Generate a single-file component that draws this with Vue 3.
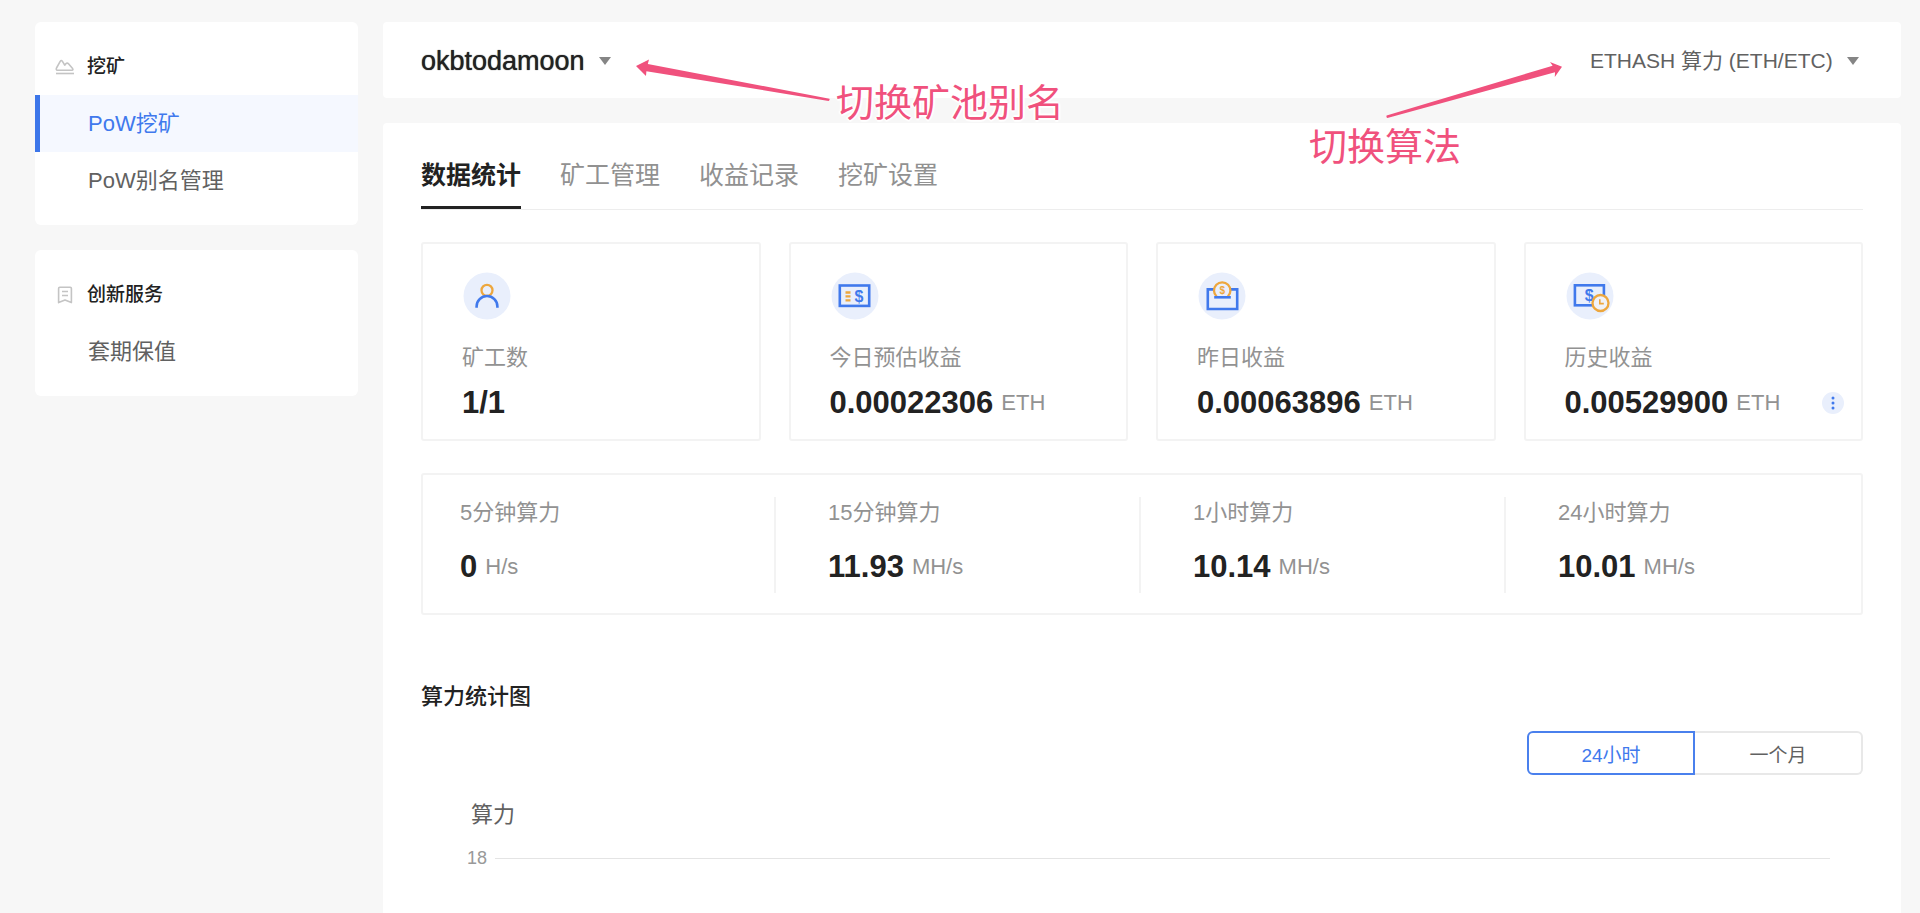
<script setup>
import { ref } from 'vue'

const menus = [
  { title: '挖矿', icon: 'mountain', items: ['PoW挖矿', 'PoW别名管理'] },
  { title: '创新服务', icon: 'bookmark', items: ['套期保值'] }
]
const activeMenu = ref('PoW挖矿')

const tabs = ['数据统计', '矿工管理', '收益记录', '挖矿设置']
const activeTab = ref('数据统计')

const cards = [
  { icon: 'worker', label: '矿工数', value: '1/1', unit: '' },
  { icon: 'bill', label: '今日预估收益', value: '0.00022306', unit: 'ETH' },
  { icon: 'wallet', label: '昨日收益', value: '0.00063896', unit: 'ETH' },
  { icon: 'history', label: '历史收益', value: '0.00529900', unit: 'ETH', more: true }
]

const rates = [
  { label: '5分钟算力', value: '0', unit: 'H/s' },
  { label: '15分钟算力', value: '11.93', unit: 'MH/s' },
  { label: '1小时算力', value: '10.14', unit: 'MH/s' },
  { label: '24小时算力', value: '10.01', unit: 'MH/s' }
]

const ranges = ['24小时', '一个月']
const activeRange = ref('24小时')
</script>

<template>
  <div class="page">
    <aside class="sidebar">
      <nav v-for="menu in menus" :key="menu.title" class="menu" :aria-label="menu.title">
        <h2 class="menu-title">
          <svg v-if="menu.icon === 'mountain'" class="menu-icon" viewBox="0 0 20 20" aria-hidden="true">
            <path d="M2.4 13.2C1.2 13.2 1 12 1.500 11L5.200 4.300Q6.200 2.700 7.300 4.200L9.700 8.200L10.800 6.800Q12.200 5.400 13.500 6.800L17.600 11.600Q18.500 13.200 17 13.200Z" />
            <path d="M1 16.500H19" />
          </svg>
          <svg v-else class="menu-icon" viewBox="0 0 20 20" aria-hidden="true">
            <path d="M4.800 2.200H15.200Q16.400 2.200 16.400 3.400V17.600L10 14.900L3.600 17.600V3.400Q3.600 2.200 4.800 2.200Z" />
            <path d="M7 6.500H13M7 10.500H13" />
          </svg>
          <span>{{ menu.title }}</span>
        </h2>
        <a
          v-for="item in menu.items"
          :key="item"
          href="#"
          class="menu-item"
          :class="{ active: item === activeMenu }"
          @click.prevent="activeMenu = item"
        >{{ item }}</a>
      </nav>
    </aside>

    <main class="main">
      <header class="topbar">
        <div class="picker">
          <select class="account" aria-label="矿池别名">
            <option>okbtodamoon</option>
          </select>
          <svg class="caret" viewBox="0 0 12 8" aria-hidden="true"><path d="M0 0H12L6 8Z" /></svg>
        </div>
        <div class="picker">
          <select class="algorithm" aria-label="算法">
            <option>ETHASH 算力 (ETH/ETC)</option>
          </select>
          <svg class="caret" viewBox="0 0 12 8" aria-hidden="true"><path d="M0 0H12L6 8Z" /></svg>
        </div>

        <div class="note note-account">
          <svg class="arrow" width="194" height="46" viewBox="0 0 194 46" aria-hidden="true">
            <path d="M0 10L13 3.500L11.800 8L193.500 42.700Q194 44.500 192.600 44.900L10.400 15.200L10 20Z" />
          </svg>
          <span>切换矿池别名</span>
        </div>
        <div class="note note-algorithm">
          <svg class="arrow" width="176" height="60" viewBox="0 0 176 60" aria-hidden="true">
            <path d="M176 8.700L164 4L166.600 7.700L0.600 57.500Q0 59.500 1.400 60L169 14.200L168.800 19Z" />
          </svg>
          <span>切换算法</span>
        </div>
      </header>

      <section class="panel">
        <div class="tabs" role="tablist">
          <button
            v-for="tab in tabs"
            :key="tab"
            type="button"
            role="tab"
            class="tab"
            :class="{ active: tab === activeTab }"
            :aria-selected="tab === activeTab"
            @click="activeTab = tab"
          >{{ tab }}</button>
        </div>

        <div class="cards">
          <article v-for="card in cards" :key="card.label" class="card">
            <svg class="card-icon" viewBox="0 0 50 50" aria-hidden="true">
              <circle class="disc" cx="25" cy="25" r="23.500" />
              <g v-if="card.icon === 'worker'">
                <circle class="gold" cx="25" cy="19.300" r="5.500" />
                <path class="blue" d="M14.600 36.800V35.400A10.400 10.400 0 0 1 35.400 35.400V36.800" />
              </g>
              <g v-else-if="card.icon === 'bill'">
                <rect class="blue" x="9.800" y="14.500" width="29.400" height="20.400" />
                <path class="gold" d="M15.500 21.500H20.500M15.500 25.400H20.500M15.500 29.400H20.500" />
                <text class="dollar" x="29" y="30.800" font-size="16">$</text>
              </g>
              <g v-else-if="card.icon === 'wallet'">
                <path class="blue" d="M17 18.400H10.800V38H40.200V18.400H34" />
                <path class="gold" d="M19.600 25.500A8.200 8.200 0 1 1 30.800 25.500" />
                <path class="blue" d="M17.200 26.300H33.800" />
                <text class="dollar small" x="25.200" y="23" font-size="10">$</text>
              </g>
              <g v-else>
                <rect class="blue" x="9.900" y="14.300" width="29" height="20" />
                <text class="dollar" x="24.300" y="29.600" font-size="16">$</text>
                <circle class="gold clock" cx="35.500" cy="32" r="8" />
                <path class="gold thin" d="M34.800 28.300V32.600H38.800" />
              </g>
            </svg>
            <p class="label">{{ card.label }}</p>
            <p class="figure">
              <strong>{{ card.value }}</strong>
              <span v-if="card.unit" class="unit">{{ card.unit }}</span>
              <button v-if="card.more" type="button" class="more" aria-label="更多">
                <svg viewBox="0 0 22 22" aria-hidden="true">
                  <circle cx="11" cy="6" r="1.500" /><circle cx="11" cy="11" r="1.500" /><circle cx="11" cy="16" r="1.500" />
                </svg>
              </button>
            </p>
          </article>
        </div>

        <div class="rates">
          <div v-for="rate in rates" :key="rate.label" class="rate">
            <p class="label">{{ rate.label }}</p>
            <p class="figure">
              <strong>{{ rate.value }}</strong>
              <span class="unit">{{ rate.unit }}</span>
            </p>
          </div>
        </div>

        <h3 class="chart-title">算力统计图</h3>
        <div class="ranges">
          <button
            v-for="range in ranges"
            :key="range"
            type="button"
            class="range"
            :class="{ active: range === activeRange }"
            @click="activeRange = range"
          >{{ range }}</button>
        </div>
        <div class="chart">
          <p class="axis-name">算力</p>
          <div class="tick">
            <span>18</span>
            <i class="grid-line"></i>
          </div>
        </div>
      </section>
    </main>
  </div>
</template>

<style>
body {
  background: #f7f7f7;
}
</style>

<style scoped>
.page {
  box-sizing: border-box;
  display: flex;
  align-items: stretch;
  gap: 25px;
  min-height: 100vh;
  padding: 22px 19px 0 35px;
  background: #f7f7f7;
  color: #222;
  font-family: "Liberation Sans", "Noto Sans CJK SC", sans-serif;
  font-size: 22px;
}
.page *,
.page *::before {
  box-sizing: border-box;
}
h2,
h3,
p {
  margin: 0;
}
button,
select {
  margin: 0;
  padding: 0;
  border: 0;
  background: none;
  font-family: inherit;
  cursor: pointer;
}

.sidebar {
  display: flex;
  flex: 0 0 323px;
  flex-direction: column;
  gap: 25px;
}
.menu {
  padding: 16px 0;
  border-radius: 6px;
  background: #fff;
}
.menu-title {
  display: flex;
  align-items: center;
  gap: 12px;
  height: 57px;
  padding-left: 20px;
  font-size: 19px;
  font-weight: 500;
  line-height: 30px;
}
.menu-icon {
  width: 20px;
  height: 20px;
  fill: none;
  stroke: #c4c4c4;
  stroke-width: 1.6;
  stroke-linejoin: round;
}
.menu-item {
  display: block;
  height: 57px;
  padding: 14px 0 0 48px;
  border-left: 5px solid transparent;
  color: #616161;
  line-height: 30px;
  text-decoration: none;
}
.menu-item.active {
  border-left-color: #3d76e9;
  background: #f5f8ff;
  color: #4079ed;
}

.main {
  display: flex;
  flex: 1;
  flex-direction: column;
  gap: 25px;
  min-width: 0;
}
.topbar {
  position: relative;
  display: flex;
  align-items: center;
  justify-content: space-between;
  height: 76px;
  padding: 2px 38px 0;
  border-radius: 4px;
  background: #fff;
}
.picker {
  display: flex;
  align-items: center;
  gap: 14px;
}
.picker select {
  appearance: none;
  line-height: 36px;
}
.account {
  color: #222;
  font-size: 27px;
  text-shadow: 0 0 1px #222;
}
.algorithm {
  color: #616161;
  font-size: 21px;
}
.caret {
  width: 12px;
  height: 8px;
  margin-right: 4px;
  fill: #858585;
}
.note {
  position: absolute;
  z-index: 1;
  color: #f0517d;
  font-size: 38px;
  line-height: 44px;
  white-space: nowrap;
  text-shadow: 2px 0 1px #fff, -2px 0 1px #fff, 0 2px 1px #fff, 0 -2px 1px #fff;
  pointer-events: none;
}
.note .arrow {
  display: block;
  fill: #f0517d;
}
.note-account {
  top: 34px;
  left: 253px;
  display: flex;
  gap: 6px;
}
.note-account span {
  margin-top: 25px;
}
.note-algorithm {
  top: 36px;
  right: 339px;
  width: 253px;
}
.note-algorithm .arrow {
  margin: 0 0 7px 77px;
}
.note-algorithm span {
  display: block;
}

.panel {
  flex: 1;
  padding: 37px 38px 0;
  border-radius: 4px 4px 0 0;
  background: #fff;
}
.tabs {
  display: flex;
  gap: 39px;
  border-bottom: 1px solid #ededed;
}
.tab {
  padding-bottom: 16px;
  border-bottom: 3px solid transparent;
  color: #919191;
  font-size: 25px;
  line-height: 30px;
}
.tab.active {
  border-bottom-color: #222;
  color: #222;
  font-weight: 700;
}

.cards {
  display: grid;
  grid-template-columns: repeat(4, 1fr);
  gap: 28px;
  margin-top: 32px;
}
.card {
  padding: 27px 17px 18px 39px;
  border: 2px solid #f3f3f3;
  border-radius: 3px;
}
.card-icon {
  display: block;
  width: 50px;
  height: 50px;
  margin-bottom: 22px;
}
.disc {
  fill: #e9effc;
}
.blue,
.gold {
  fill: none;
  stroke: #4079ec;
  stroke-width: 2.6;
}
.gold {
  stroke: #eda73e;
  stroke-width: 2.3;
}
.clock {
  fill: #f0f2f8;
}
.thin {
  stroke-width: 1.6;
}
.dollar {
  fill: #4079ec;
  font-weight: 700;
  text-anchor: middle;
}
.dollar.small {
  fill: #eda73e;
}
.label {
  color: #929292;
  font-size: 22px;
  line-height: 30px;
}
.figure {
  display: flex;
  align-items: center;
  gap: 8px;
  color: #929292;
  line-height: 36px;
}
.figure strong {
  color: #222;
  font-size: 31px;
}
.card .figure {
  margin-top: 12px;
}
.more {
  width: 22px;
  height: 22px;
  margin-left: auto;
  border-radius: 50%;
  background: #e9effc;
}
.more svg {
  display: block;
  fill: #4079ec;
}

.rates {
  display: grid;
  grid-template-columns: 352fr 366fr 366fr 358fr;
  margin-top: 32px;
  padding: 22px 0 20px;
  border: 2px solid #f3f3f3;
  border-radius: 3px;
}
.rate {
  height: 96px;
  padding: 1px 0 0 52px;
  border-left: 2px solid #f3f3f3;
}
.rate:first-child {
  padding-left: 37px;
  border-left: 0;
}
.rate .figure {
  margin-top: 21px;
}

.chart-title {
  margin-top: 67px;
  font-size: 22px;
  font-weight: 500;
  line-height: 30px;
}
.ranges {
  display: flex;
  justify-content: flex-end;
  margin-top: 19px;
}
.range {
  width: 168px;
  height: 44px;
  border: 2px solid #e8e8e8;
  border-left: 0;
  border-radius: 0 6px 6px 0;
  color: #616161;
  font-size: 19px;
}
.range:first-child {
  border-left: 2px solid #e8e8e8;
  border-radius: 6px 0 0 6px;
}
.range.active {
  border: 2px solid #4a80ed;
  color: #4079ed;
}
.chart {
  margin-top: 25px;
  padding: 0 33px 0 46px;
}
.axis-name {
  padding-left: 4px;
  color: #616161;
  line-height: 30px;
}
.tick {
  display: flex;
  align-items: center;
  gap: 8px;
  margin-top: 18px;
  color: #999;
  font-size: 18px;
  line-height: 20px;
}
.grid-line {
  flex: 1;
  height: 1px;
  background: #e4e4e4;
}
</style>
